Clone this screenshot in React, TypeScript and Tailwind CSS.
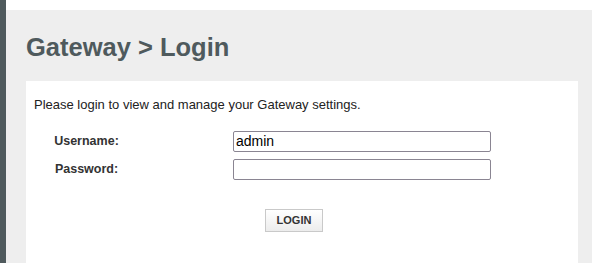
export default function App() {
  return (
    <div className="flex h-[263px] w-[592px] overflow-hidden bg-white font-['Liberation_Sans',Arial,sans-serif]">
      <div className="w-[6px] shrink-0 bg-[#4f5a5d]" />
      <div className="flex flex-1 flex-col pt-[10px]">
        <div className="flex flex-1 flex-col bg-[#eeeeee] pl-[20px] pr-[14px]">
          <h1 className="pt-[20px] pb-[16px] text-[25.5px] leading-[35px] font-bold text-[#4f5a5d]">
            Gateway &gt; Login
          </h1>
          <div className="flex-1 bg-white px-[8px] pt-[16px]">
            <p className="text-[13px] leading-[16px] text-[#222]">
              Please login to view and manage your Gateway settings.
            </p>
            <div className="mt-[18px] flex flex-col gap-[7px]">
              <div className="flex items-center">
                <label className="w-[104px] pl-[1px] text-center text-[12.5px] font-bold text-[#333]">Username:</label>
                <div className="w-[95px]" />
                <input
                  className="h-[21px] w-[258px] rounded-[2px] border border-[#8a8592] px-[2px] text-[14px] text-black outline-none"
                  defaultValue="admin"
                />
              </div>
              <div className="flex items-center">
                <label className="w-[104px] pl-[1px] text-center text-[12.5px] font-bold text-[#333]">Password:</label>
                <div className="w-[95px]" />
                <input
                  type="password"
                  className="h-[21px] w-[258px] rounded-[2px] border border-[#8a8592] px-[2px] text-[14px] outline-none"
                />
              </div>
            </div>
            <div className="mt-[27px] pl-[231px]">
              <button className="h-[23px] w-[58px] border border-[#c9c9c9] bg-gradient-to-b from-white to-[#ececec] text-[11px] font-bold text-[#333]">
                LOGIN
              </button>
            </div>
          </div>
        </div>
      </div>
    </div>
  );
}
